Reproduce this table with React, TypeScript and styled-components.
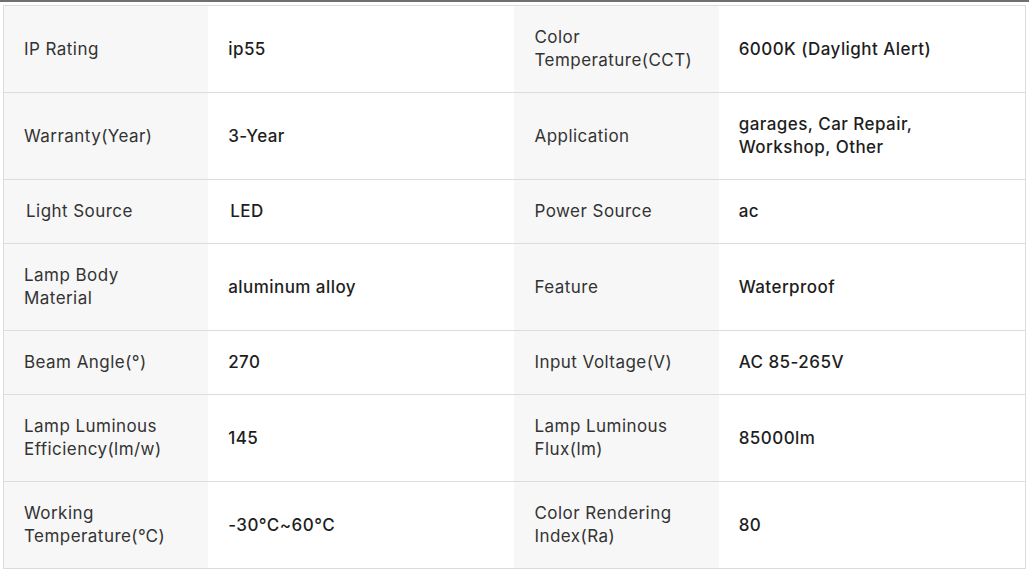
import React from "react";
import styled, { createGlobalStyle } from "styled-components";

const GlobalStyle = createGlobalStyle`
  body {
    margin: 0;
    background: #fff;
    font-family: Inter, "Noto Sans", sans-serif;
  }
`;

const Page = styled.div`
  border-top: 2px solid #707070;
  padding: 3px 0 0 3px;
`;

const SpecTable = styled.div`
  width: 1021px;
  border: 1px solid #dcdcdc;
  border-bottom: none;
`;

const Row = styled.div`
  display: grid;
  grid-template-columns: 20% 30% 20% 30%;
  border-bottom: 1px solid #dcdcdc;
`;

const Cell = styled.div<{ $label?: boolean; $nudge?: boolean }>`
  display: flex;
  align-items: center;
  background: ${(p) => (p.$label ? "#f7f7f7" : "#fff")};
  color: ${(p) => (p.$label ? "#333" : "#1e1e1e")};
  font-weight: ${(p) => (p.$label ? 400 : 500)};
  font-size: 17px;
  line-height: 23px;
  letter-spacing: 0.45px;
  padding: 20px 20px 20px ${(p) => (p.$nudge ? "22px" : "20px")};
  min-height: 63px;
  box-sizing: border-box;
`;

type Spec = [string, string, string, string, boolean?];

const specs: Spec[] = [
  ["IP Rating", "ip55", "Color Temperature(CCT)", "6000K (Daylight Alert)"],
  ["Warranty(Year)", "3-Year", "Application", "garages, Car Repair, Workshop, Other"],
  ["Light Source", "LED", "Power Source", "ac", true],
  ["Lamp Body Material", "aluminum alloy", "Feature", "Waterproof"],
  ["Beam Angle(°)", "270", "Input Voltage(V)", "AC 85-265V"],
  ["Lamp Luminous Efficiency(lm/w)", "145", "Lamp Luminous Flux(lm)", "85000lm"],
  ["Working Temperature(℃)", "-30°C~60°C", "Color Rendering Index(Ra)", "80"],
];

const App = () => {
  return (
    <Page>
      <GlobalStyle />
      <SpecTable>
        {specs.map(([l1, v1, l2, v2, nudge]) => (
          <Row key={l1}>
            <Cell $label $nudge={nudge}>{l1}</Cell>
            <Cell $nudge={nudge}>{v1}</Cell>
            <Cell $label>{l2}</Cell>
            <Cell>{v2}</Cell>
          </Row>
        ))}
      </SpecTable>
    </Page>
  );
};

export default App;
